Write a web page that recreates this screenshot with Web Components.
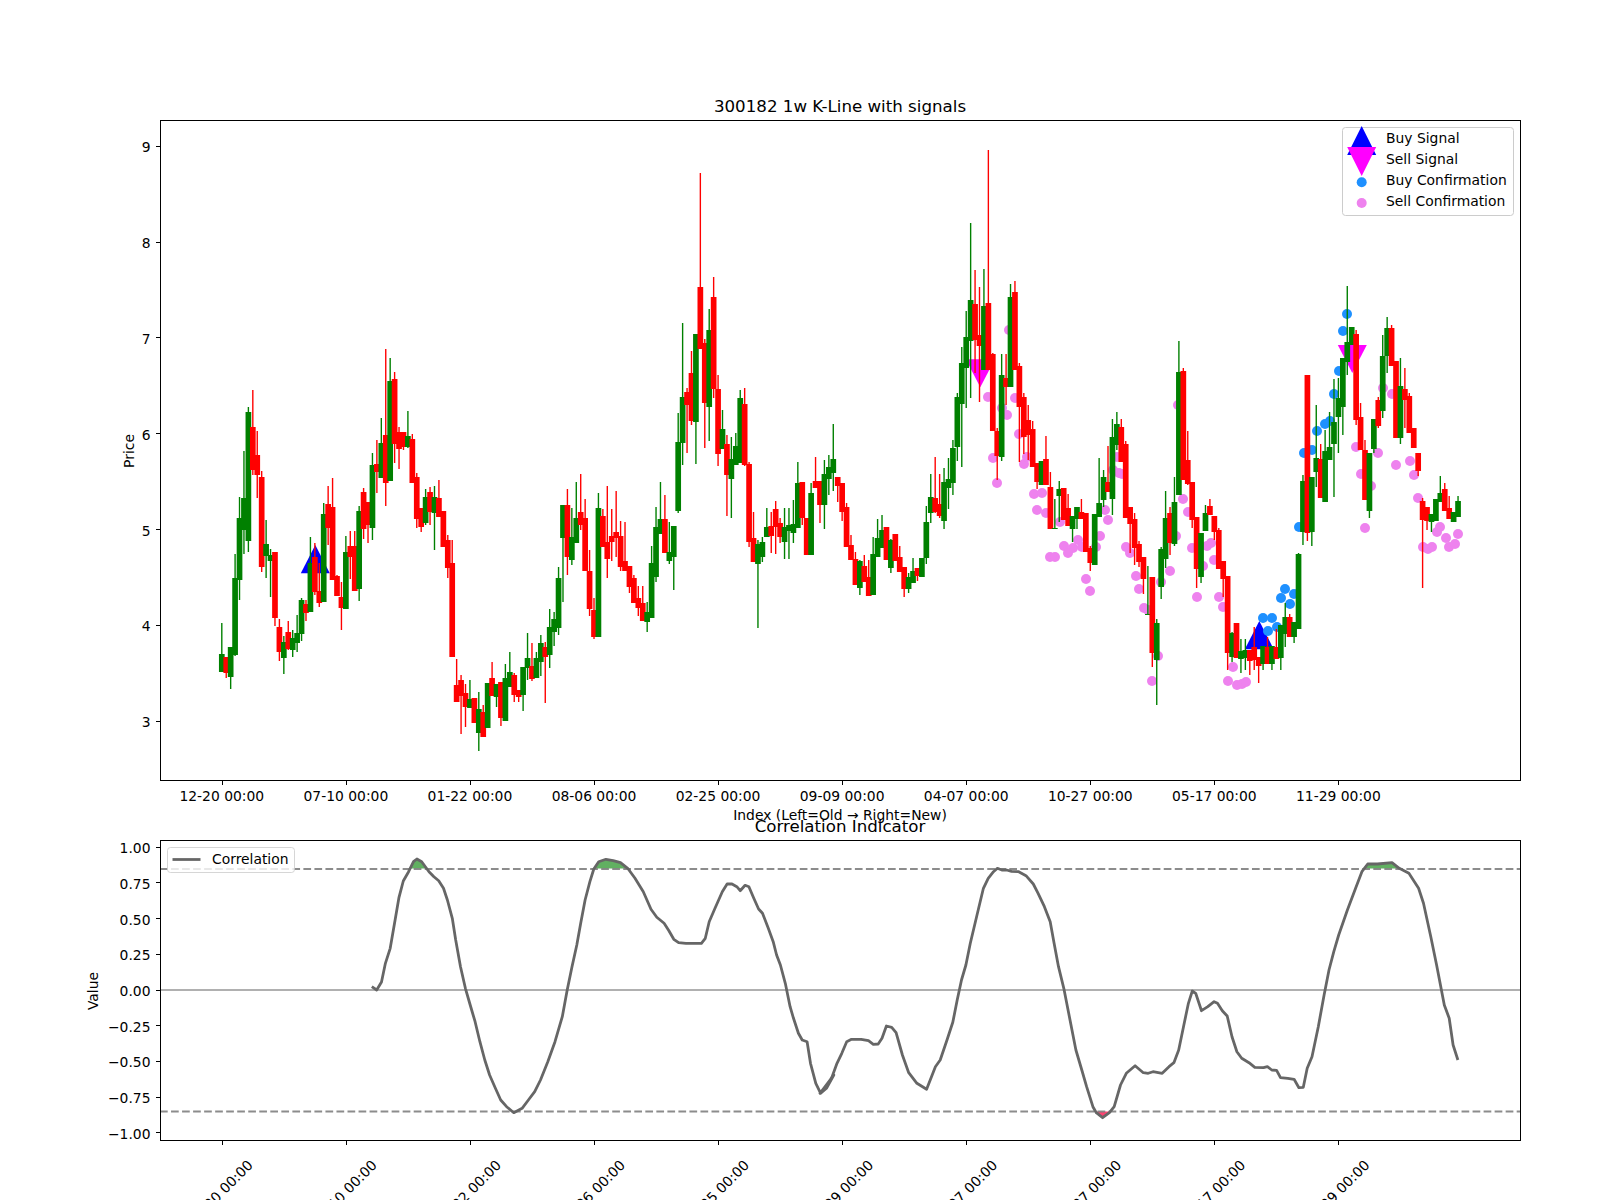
<!DOCTYPE html>
<html lang="en"><head><meta charset="utf-8"><title>300182 1w K-Line with signals</title>
<style>html,body{margin:0;padding:0;background:#fff;overflow:hidden}</style></head>
<body>
<mpl-figure>
  <kline-axes></kline-axes>
  <corr-axes></corr-axes>
</mpl-figure>
<script>
const LABELS=["12-20 00:00","07-10 00:00","01-22 00:00","08-06 00:00","02-25 00:00","09-09 00:00","04-07 00:00","10-27 00:00","05-17 00:00","11-29 00:00"];
const X=i=>221.8+4.431*i;
const AX={l:160.5,r:1520.5};
const BASE=`:host{display:block;width:1600px}
svg{display:block;overflow:visible}
text{font-family:"DejaVu Sans",sans-serif;font-size:13.89px;fill:#000}
.t{font-size:16.67px}
.crisp{shape-rendering:crispEdges}`;
const CANDLES=`g 654 672 623 672,r 657 673 657 678,g 647 677 647 689,g 578 655 554 656,g 518 580 497 600,g 498 530 451 554,g 412 541 407 552,r 427 470 390 475,r 455 475 431 498,r 477 567 471 572,
g 544 556 520 578,g 555 561 549 597,r 552 618 552 626,r 627 652 619 661,g 642 658 636 674,r 632 649 621 650,g 638 650 630 657,g 633 643 615 652,g 600 634 598 641,r 604 613 600 621,
g 563 612 537 612,r 557 592 543 595,r 591 603 563 607,g 514 602 503 602,r 504 528 486 545,r 507 580 478 580,r 576 596 575 596,r 597 608 582 630,g 552 609 536 609,r 546 557 531 579,
r 546 591 531 591,g 511 589 506 601,r 492 529 488 539,r 502 525 503 543,g 465 528 453 540,r 464 472 440 493,g 443 478 418 478,r 435 483 349 506,g 381 481 358 480,r 379 444 372 463,
r 432 449 427 469,r 432 447 432 450,g 436 447 411 448,r 439 483 434 483,r 477 519 473 528,r 508 527 508 532,g 497 523 489 525,r 492 512 487 525,g 497 513 486 550,r 498 517 480 517,
r 511 547 511 547,r 540 568 535 578,r 563 657 540 657,r 685 702 659 702,r 680 696 675 734,r 693 707 684 727,g 699 708 680 708,r 698 723 698 723,g 709 733 692 751,r 712 737 705 737,
g 683 728 683 728,r 678 696 662 696,g 684 697 684 707,r 682 718 682 726,g 678 721 664 721,g 672 687 652 687,r 675 695 673 702,r 690 697 690 702,g 667 695 667 711,g 658 668 633 680,
r 666 679 643 681,g 658 678 652 678,g 643 662 635 676,r 647 657 642 703,g 627 655 609 668,g 619 632 612 646,g 578 628 567 635,g 505 538 505 602,r 505 557 489 575,g 537 560 508 565,
g 518 543 482 543,r 512 525 474 530,r 518 571 499 571,r 571 609 550 616,r 610 637 598 639,g 508 637 493 637,r 516 547 509 547,r 542 559 486 578,r 536 542 509 561,r 532 538 491 557,
r 536 567 521 571,r 561 571 522 571,r 566 587 566 593,r 578 603 575 603,r 598 608 586 616,r 603 621 586 621,g 612 622 602 632,g 563 618 546 618,g 527 577 507 582,g 519 534 482 534,
r 519 553 495 553,g 552 561 522 564,g 526 557 526 590,g 442 511 413 513,g 397 443 323 465,r 392 405 388 453,r 373 421 351 425,g 334 422 334 464,r 287 349 173 349,r 343 403 339 448,
g 330 407 309 441,r 297 389 277 398,r 389 454 375 466,g 429 449 410 449,r 444 475 435 516,g 459 479 437 518,g 446 465 433 465,g 398 463 390 463,r 404 465 388 466,r 464 542 462 547,
r 538 562 512 562,g 544 564 540 628,g 542 557 537 562,g 527 537 508 537,r 526 536 512 553,r 509 527 501 554,r 523 537 518 543,g 527 542 508 559,g 525 531 508 559,g 524 533 500 543,
g 483 528 462 528,r 482 518 482 525,r 518 555 518 555,g 493 555 483 555,r 481 488 457 488,r 481 505 481 523,g 474 505 460 529,g 467 479 455 495,g 459 473 424 491,r 477 486 477 502,
r 483 512 483 521,r 507 547 503 547,r 545 560 535 560,r 559 585 552 585,g 561 588 560 595,r 566 582 555 582,r 577 596 560 596,g 554 595 537 595,g 538 557 519 557,g 530 548 515 548,
r 527 560 527 560,g 540 568 539 573,r 534 561 534 561,r 557 572 546 572,r 567 589 567 597,g 577 589 573 593,g 571 583 558 583,r 568 576 568 581,g 558 577 558 577,g 522 558 506 564,
g 497 513 474 523,r 498 512 457 513,r 504 516 474 518,g 482 521 468 529,g 479 488 458 509,g 448 483 440 495,g 397 447 393 461,g 363 404 347 467,g 337 368 311 408,g 300 341 223 398,
r 304 340 270 373,r 335 346 287 402,g 306 370 269 370,r 303 370 150 370,r 354 431 353 431,r 431 456 428 480,g 375 457 354 461,r 378 387 354 405,g 297 387 284 387,r 292 370 281 370,
r 366 407 363 462,r 397 437 393 454,r 420 435 405 460,r 429 467 421 467,r 463 482 463 489,g 461 485 461 485,r 459 485 436 485,r 487 529 472 529,g 528 529 499 529,g 489 496 481 522,
r 488 520 488 520,r 508 526 494 526,g 516 529 516 542,g 507 519 507 529,r 512 519 499 519,r 513 552 513 552,r 548 563 546 571,g 514 565 514 565,g 503 517 458 517,g 477 500 470 507,
r 482 492 446 492,g 437 499 419 515,g 424 445 412 450,r 427 462 419 462,r 444 518 441 518,r 507 524 507 553,r 519 548 513 565,r 544 562 541 567,r 557 579 557 594,g 614 615 566 615,
r 577 653 577 667,g 623 660 619 705,g 549 587 547 599,g 518 559 491 568,r 513 543 507 555,g 502 544 477 546,g 372 495 341 495,r 371 480 368 480,r 460 484 431 485,r 482 520 482 528,
r 517 569 517 588,g 533 577 533 583,g 513 531 505 531,r 506 515 499 515,r 516 532 516 540,r 530 569 528 569,r 561 579 561 597,r 576 653 576 670,g 633 657 632 662,r 623 658 623 658,
g 651 659 639 673,g 650 658 639 670,r 650 661 650 675,r 647 660 627 670,r 657 666 657 683,g 646 664 646 670,r 647 664 637 664,g 646 664 646 670,r 647 659 629 659,g 625 658 625 670,
g 617 634 603 647,r 617 637 614 637,g 622 637 622 643,g 554 629 553 629,g 481 532 475 545,r 375 533 375 541,g 477 532 477 546,g 458 472 405 487,r 459 498 444 498,g 451 502 430 502,
g 447 460 412 460,g 422 444 379 497,g 398 417 378 453,g 358 407 358 435,g 342 362 286 375,g 327 345 327 345,r 334 420 330 425,r 417 450 403 450,r 450 500 440 500,g 453 511 453 518,
g 419 449 419 453,r 400 426 397 428,g 356 411 335 418,g 328 356 317 373,r 328 366 325 366,r 361 438 361 438,g 386 438 358 444,r 389 400 368 428,r 396 433 393 433,r 428 448 428 448,
r 453 471 453 476,r 501 520 498 588,r 507 521 507 530,g 514 522 514 532,g 499 521 499 521,g 493 502 476 502,r 489 511 483 511,r 508 519 496 519,g 512 522 512 522,g 501 517 496 517`;
const SELL=[[988,397],[1002,408],[1007,415],[1009,330],[1015,398],[1019,434],[993,458],[997,483],[1024,464],[1027,457],[1034,494],[1042,493],[1037,510],[1046,513],[1060,522],[1064,546],[1078,540],[1073,548],[1068,553],[1082,547],[1096,547],[1100,536],[1105,510],[1108,520],[1117,457],[1119,473],[1050,557],[1055,557],[1086,579],[1090,591],[1113,470],[1122,474],[1126,547],[1130,553],[1136,576],[1139,589],[1144,608],[1148,610],[1152,681],[1158,656],[1161,582],[1170,571],[1176,536],[1178,405],[1183,499],[1188,512],[1192,548],[1197,597],[1203,566],[1207,546],[1211,543],[1214,560],[1219,597],[1223,607],[1228,681],[1233,667],[1237,685],[1242,684],[1246,682],[1356,447],[1378,453],[1396,465],[1410,461],[1414,475],[1365,528],[1361,474],[1371,486],[1383,388],[1392,394],[1418,498],[1423,547],[1428,549],[1432,547],[1437,532],[1440,527],[1446,538],[1449,547],[1455,544],[1458,534]];
const BUY=[[1263,618],[1272,618],[1268,631],[1277,627],[1281,598],[1285,589],[1290,604],[1294,594],[1299,527],[1304,453],[1312,450],[1317,431],[1325,424],[1330,421],[1334,394],[1339,371],[1343,331],[1347,314]];
const C1=[[602,530],[612,540],[622,516],[630,460],[640,415],[650,330],[658,262],[667,213],[678,185],[688,155],[695,147],[705,155],[720,185],[730,200],[740,212],[750,235],[758,270],[768,325],[775,390],[785,470],[795,535],[805,585],[815,635],[825,695],[835,750],[845,795],[857,835],[868,870],[880,890],[895,908],[912,895],[925,870],[938,845],[950,810],[965,755],[980,695],[995,620],[1005,540],[1015,470],[1025,405],[1033,340],[1042,270],[1052,215],[1060,177],[1070,155],[1085,148],[1100,152],[1115,158],[1130,175],[1145,205],[1162,245],[1178,298],[1190,322],[1205,340],[1215,362],[1225,388],[1235,398],[1250,400],[1265,400],[1282,400],[1290,385],[1298,335],[1310,295],[1325,245],[1335,222],[1345,222],[1355,230],[1362,242],[1372,226],[1380,230],[1390,265],[1400,297],[1408,310],[1420,355],[1430,395],[1437,435],[1445,465],[1455,520],[1465,590],[1472,625],[1482,670],[1490,690],[1500,695],[1507,760],[1518,820],[1528,850],[1540,835],[1555,795]];
const C2=[[0,850],[10,838],[25,800],[35,760],[45,730],[55,695],[65,688],[85,688],[100,692],[110,703],[120,702],[128,685],[137,648],[148,652],[157,668],[170,735],[183,788],[200,820],[220,838],[230,800],[238,770],[248,750],[262,690],[274,637],[283,570],[292,510],[301,465],[310,400],[323,320],[337,235],[347,205],[358,185],[366,175],[375,180],[385,180],[395,184],[410,185],[425,197],[440,222],[450,250],[463,290],[475,335],[483,400],[492,470],[503,535],[513,610],[528,720],[540,780],[550,830],[563,890],[570,908],[583,923],[597,908],[607,890],[620,825],[632,790],[650,767],[667,788],[677,790],[687,785],[706,790],[720,770],[730,758],[740,720],[750,650],[760,580],[768,543],[775,550],[787,602],[800,590],[813,575],[820,580],[830,602],[840,618],[850,680],[860,725],[870,745],[885,758],[897,772],[915,773],[923,770],[932,780],[942,781],[950,803],[965,805],[978,808],[988,833],[997,832],[1005,775],[1015,740],[1028,650],[1040,555],[1050,480],[1060,425],[1070,375],[1088,300],[1105,235],[1118,185],[1130,162],[1150,162],[1180,158],[1195,175],[1215,190],[1235,235],[1245,280],[1260,380],[1272,465],[1288,585],[1298,625],[1306,705],[1316,750]];
const CURVE=[...C1.map(([x,y])=>[80+x/2.063,810+y/3]),...C2.map(([x,y])=>[820+x/2.063,810+y/3])];
function ticksX(bottom){let s='';for(let k=0;k<10;k++){const x=Math.round(X(28*k))+.5;s+=`<line class="crisp" x1="${x}" x2="${x}" y1="${bottom}" y2="${bottom+4.9}" stroke="#000" stroke-width="1"/>`}return s}
function frame(t,b){return `<rect class="crisp" x="${AX.l}" y="${t}" width="${AX.r-AX.l}" height="${b-t}" fill="none" stroke="#000" stroke-width="1"/>`}
function tickY(y,label){return `<line class="crisp" x1="${AX.l-4.9}" x2="${AX.l}" y1="${y}" y2="${y}" stroke="#000" stroke-width="1"/><text x="150.5" y="${y+6}" text-anchor="end">${label}</text>`}
const tri=(cx,base,apex,hw,fill)=>`<polygon points="${cx-hw},${base} ${cx+hw},${base} ${cx},${apex}" fill="${fill}"/>`;

class KlineAxes extends HTMLElement{
  constructor(){super();
    const root=this.attachShadow({mode:'open'});
    const y=p=>146.3+(9-p)*95.83;
    let body=tri(315.3,573.3,545,14.5,'#0000ff')+tri(1259.3,649.3,621,14.5,'#0000ff')+tri(980.3,359.3,387.3,14.5,'#ff00ff')+tri(1352.3,345,373,14.5,'#ff00ff');
    for(const [a,b] of BUY)body+=`<circle cx="${a}" cy="${b}" r="5" fill="#1e90ff"/>`;
    for(const [a,b] of SELL)body+=`<circle cx="${a}" cy="${b}" r="5" fill="#ee82ee"/>`;
    CANDLES.split(',').forEach((c,i)=>{const [k,bt,bb,wt,wb]=c.trim().split(' ');const col=k==='g'?'#008000':'#ff0000';const x=X(i);
      body+=`<line x1="${x}" x2="${x}" y1="${wt}" y2="${wb}" stroke="${col}" stroke-width="1.39"/><rect x="${x-2.85}" y="${bt}" width="5.7" height="${bb-bt}" fill="${col}"/>`});
    let yt='';for(let p=3;p<=9;p++)yt+=tickY(y(p),p);
    const leg=`<rect x="1342.5" y="127.5" width="171" height="88" rx="3" fill="#fff" fill-opacity=".8" stroke="#ccc"/>`+
      tri(1361.7,155,126,14.5,'#0000ff')+tri(1361.7,147,176,14.5,'#ff00ff')+
      `<circle cx="1361.7" cy="182.3" r="5" fill="#1e90ff"/><circle cx="1361.7" cy="203" r="5" fill="#ee82ee"/>`+
      ["Buy Signal","Sell Signal","Buy Confirmation","Sell Confirmation"].map((t,i)=>`<text x="1386" y="${143+i*20.9}">${t}</text>`).join('');
    root.innerHTML=`<style>${BASE}:host{height:810px}</style>
    <svg width="1600" height="810" viewBox="0 0 1600 810">
      <text class="t" x="840" y="112" text-anchor="middle">300182 1w K-Line with signals</text>
      <g>${body}</g>${frame(120.5,780.5)}${ticksX(780.5)}${yt}
      ${LABELS.map((t,k)=>`<text x="${X(28*k)}" y="801" text-anchor="middle">${t}</text>`).join('')}
      <text x="840" y="820" text-anchor="middle">Index (Left=Old → Right=New)</text>
      <text transform="translate(133.5 451) rotate(-90)" text-anchor="middle">Price</text>
      ${leg}
    </svg>`;
  }
}
class CorrAxes extends HTMLElement{
  constructor(){super();
    const root=this.attachShadow({mode:'open'});
    const O=810;
    const yv=v=>990-142.9*v-O;
    const d='M'+CURVE.map(([a,b])=>`${a.toFixed(1)} ${(b-O).toFixed(1)}`).join('L');
    const dc=d+'Z';
    let yt='';for(let v=-1;v<=1.001;v+=.25){const s=(v<0?'−':'')+Math.abs(v).toFixed(2);yt+=tickY(yv(v),s)}
    root.innerHTML=`<style>${BASE}:host{height:390px}</style>
    <svg width="1600" height="390" viewBox="0 0 1600 390">
      <defs>
        <clipPath id="up"><rect x="400" y="30" width="110" height="${yv(.85)-30}"/><rect x="580" y="30" width="80" height="${yv(.85)-30}"/><rect x="1350" y="30" width="80" height="${yv(.85)-30}"/></clipPath>
        <clipPath id="dn"><rect x="1050" y="${yv(-.85)}" width="60" height="40"/></clipPath>
      </defs>
      <text class="t" x="840" y="21.7" text-anchor="middle">Correlation Indicator</text>
      <path d="${dc}" fill="#008000" fill-opacity=".62" clip-path="url(#up)"/>
      <path d="${dc}" fill="#ff0040" fill-opacity=".75" clip-path="url(#dn)"/>
      <line class="crisp" x1="160" x2="1520" y1="${yv(0)}" y2="${yv(0)}" stroke="#b0b0b0" stroke-width="2"/>
      <line x1="160" x2="1520" y1="${yv(.85)+.5}" y2="${yv(.85)+.5}" stroke="#808080" stroke-opacity=".9" stroke-width="2.08" stroke-dasharray="7.7 3.33"/>
      <line x1="160" x2="1520" y1="${yv(-.85)}" y2="${yv(-.85)}" stroke="#808080" stroke-opacity=".9" stroke-width="2.08" stroke-dasharray="7.7 3.33"/>
      <path d="${d}" fill="none" stroke="#666" stroke-width="2.78" stroke-linejoin="round" stroke-linecap="butt"/>
      ${frame(30.5,330.5)}${ticksX(330.5)}${yt}
      ${LABELS.map((t,k)=>`<text transform="translate(${X(28*k)-1.5} 382.5) rotate(-45)" text-anchor="middle" dominant-baseline="central">${t}</text>`).join('')}
      <text transform="translate(98 181) rotate(-90)" text-anchor="middle">Value</text>
      <rect x="167.5" y="37.5" width="127" height="25" rx="3" fill="#fff" fill-opacity=".8" stroke="#ccc" stroke-opacity=".8"/>
      <line x1="172.5" x2="200.5" y1="49.5" y2="49.5" stroke="#666" stroke-width="2.78"/>
      <text x="212" y="54">Correlation</text>
    </svg>`;
  }
}
class MplFigure extends HTMLElement{
  constructor(){super();
    this.attachShadow({mode:'open'}).innerHTML=`<style>:host{display:flex;flex-direction:column;width:1600px;height:1200px;overflow:hidden;background:#fff}</style><slot></slot>`;
  }
}
customElements.define('kline-axes',KlineAxes);
customElements.define('corr-axes',CorrAxes);
customElements.define('mpl-figure',MplFigure);
</script>
</body></html>
